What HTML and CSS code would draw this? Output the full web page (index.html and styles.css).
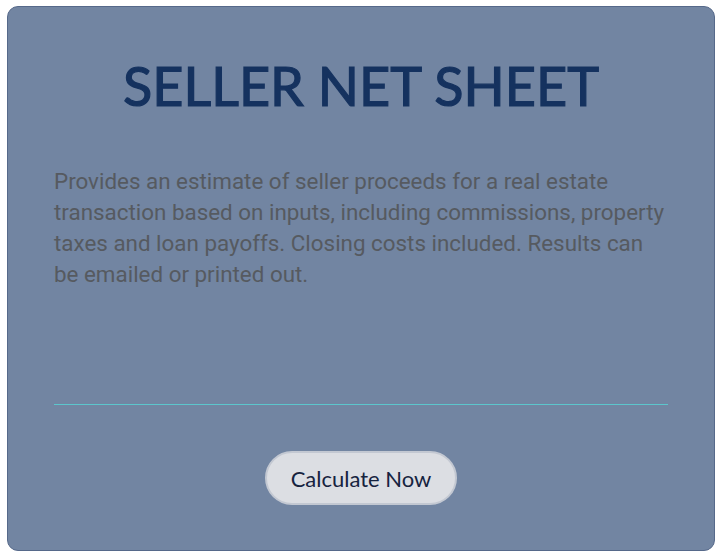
FILE: index.html
```html
<!DOCTYPE html>
<html lang="en">
<head>
<meta charset="utf-8">
<title>Seller Net Sheet</title>
<link rel="stylesheet" href="styles.css">
</head>
<body>
  <section class="calc-card">
    <h1 class="calc-title">SELLER NET SHEET</h1>
    <p class="calc-desc">Provides an estimate of seller proceeds for a real estate transaction based on inputs, including commissions, property taxes and loan payoffs. Closing costs included. Results can be emailed or printed out.</p>
    <hr class="calc-rule">
    <div class="calc-actions">
      <button class="calc-btn" type="button">Calculate Now</button>
    </div>
  </section>
</body>
</html>
```
FILE: styles.css
```css
html, body {
  margin: 0;
  padding: 0;
  background: #ffffff;
}

body {
  padding: 6px 5px 5px 7px;
}

.calc-card {
  box-sizing: border-box;
  width: 708px;
  height: 545px;
  background: #7285a2;
  border: 1px solid #56698a;
  border-radius: 11px;
  padding: 52px 46px 0 46px;
  display: flex;
  flex-direction: column;
}

.calc-title {
  margin: 0;
  font-family: "Lato", "Open Sans", sans-serif;
  font-weight: 400;
  -webkit-text-stroke: 1.2px #15325f;
  font-size: 54px;
  line-height: 54px;
  color: #15325f;
  text-align: center;
}

.calc-desc {
  margin: 53px 0 0 0;
  font-family: Roboto, "Noto Sans", sans-serif;
  font-size: 22.4px;
  line-height: 31px;
  color: #565a60;
}

.calc-rule {
  margin: 114px 0 0 0;
  border: 0;
  height: 1px;
  background: #5cc6cc;
}

.calc-actions {
  display: flex;
  justify-content: center;
  margin-top: 46px;
}

.calc-btn {
  box-sizing: border-box;
  width: 192px;
  height: 54px;
  border-radius: 27px;
  border: 2px solid #c3c8d2;
  background: #dcdee3;
  color: #16233f;
  font-family: "Lato", "Open Sans", sans-serif;
  font-size: 22px;
  padding: 0;
}
```
